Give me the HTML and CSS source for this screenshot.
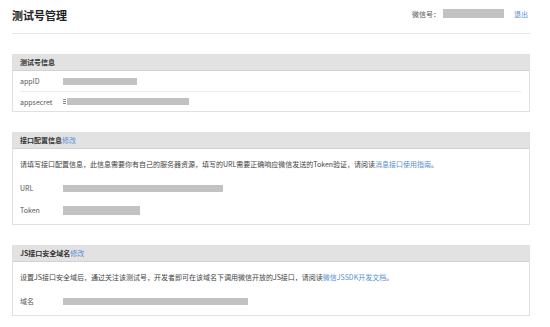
FILE: index.html
```html
<!DOCTYPE HTML>
<html lang="zh-CN">
<head>
    <title>测试号管理</title>
    <meta charset="UTF-8">
    <link rel="stylesheet" href="styles.css">
</head>
<body>
<div class="container">
    <div class="page-head">
        <h1 class="page-title">测试号管理</h1>
        <div class="account">
            <span>微信号：</span>
            <span class="mask mask-account"></span>
            <a class="link logout" href="#">退出</a>
        </div>
    </div>

    <section class="panel">
        <div class="panel-head">测试号信息</div>
        <div class="panel-body list">
            <div class="row">
                <span class="label">appID</span>
                <span class="mask" style="width: 74px"></span>
            </div>
            <div class="row">
                <span class="label">appsecret</span>
                <span class="secret-mark"></span>
                <span class="mask" style="width: 122px"></span>
            </div>
        </div>
    </section>

    <section class="panel">
        <div class="panel-head">接口配置信息<a class="link" href="#">修改</a></div>
        <div class="panel-body">
            <p class="desc">请填写接口配置信息，此信息需要你有自己的服务器资源，填写的URL需要正确响应微信发送的Token验证，请阅读<a class="link" href="#">消息接口使用指南</a>。</p>
            <div class="row plain">
                <span class="label">URL</span>
                <span class="mask" style="width: 160px"></span>
            </div>
            <div class="row plain">
                <span class="label">Token</span>
                <span class="mask mask-tall" style="width: 77px"></span>
            </div>
        </div>
    </section>

    <section class="panel">
        <div class="panel-head">JS接口安全域名<a class="link" href="#">修改</a></div>
        <div class="panel-body">
            <p class="desc">设置JS接口安全域后，通过关注该测试号，开发者即可在该域名下调用微信开放的JS接口，请阅读<a class="link" href="#">微信JSSDK开发文档</a>。</p>
            <div class="row plain">
                <span class="label">域名</span>
                <span class="mask" style="width: 185px"></span>
            </div>
        </div>
    </section>
</div>
</body>
</html>
```

FILE: styles.css
```css
* {
    box-sizing: border-box;
}

body {
    margin: 0;
    background: #fff;
    color: #444;
    font-family: "Noto Sans CJK SC", "Noto Sans", sans-serif;
    font-size: 7px;
}

.container {
    width: 518px;
    margin-left: 12px;
}

.page-head {
    display: flex;
    justify-content: space-between;
    align-items: flex-start;
    height: 34px;
    border-bottom: 1px solid #e6e6e6;
    margin-bottom: 20px;
}

.page-title {
    margin: 7px 0 0;
    font-size: 11px;
    line-height: 16px;
    font-weight: bold;
    color: #222;
}

.account {
    display: flex;
    align-items: center;
    height: 9px;
    margin-top: 9px;
    margin-right: 2px;
    color: #555;
}

.mask {
    display: inline-block;
    height: 7px;
    background: #c2c2c2;
}

.mask-account {
    width: 61px;
    height: 9px;
    margin: 0 10px 0 3px;
}

.mask-tall {
    height: 9px;
}

/* the clipped first char of the secret */
.secret-mark {
    width: 3px;
    height: 5px;
    margin-right: 1px;
    border-top: 1px solid #888;
    border-bottom: 1px solid #888;
    background: linear-gradient(#fff 1px, #888 1px, #888 2px, #fff 2px);
}

.link {
    color: #5a8fd0;
    text-decoration: none;
}

.panel {
    border: 1px solid #e0e0e0;
    margin-bottom: 20px;
}

.panel-head {
    height: 16px;
    padding-left: 7px;
    line-height: 15px;
    font-weight: bold;
    color: #333;
    background: #e2e2e2;
    border-bottom: 1px solid #d2d2d2;
}

.panel-head .link {
    font-weight: normal;
}

.panel-body {
    padding: 7px 8px 3px 7px;
}

.panel-body.list {
    padding: 0 8px 0 7px;
}

.desc {
    margin: 0 0 5px;
    line-height: 16px;
    color: #444;
}

.row {
    display: flex;
    align-items: center;
    height: 20px;
}

.row.plain {
    height: 22px;
}

.list .row + .row {
    border-top: 1px solid #ececec;
}

.label {
    width: 43px;
    flex: none;
    color: #555;
}
```
